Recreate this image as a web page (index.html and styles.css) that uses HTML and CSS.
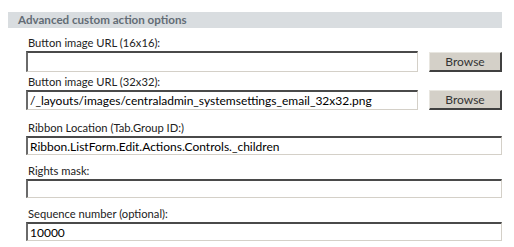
FILE: index.html
```html
<!DOCTYPE html>
<html lang="en">

<head>
    <meta charset="UTF-8">
    <title>Advanced custom action options</title>
    <link rel="stylesheet" href="styles.css">
</head>

<body>

    <div class="section">
        <div class="section-title">Advanced custom action options</div>

        <div class="fields">
            <div class="field field-image">
                <label>Button image URL (16x16):</label>
                <div class="field-row">
                    <input type="text" class="short" value="">
                    <button type="button">Browse</button>
                </div>
            </div>

            <div class="field field-image">
                <label>Button image URL (32x32):</label>
                <div class="field-row">
                    <input type="text" class="short" value="/_layouts/images/centraladmin_systemsettings_email_32x32.png">
                    <button type="button">Browse</button>
                </div>
            </div>

            <div class="field">
                <label>Ribbon Location (Tab.Group ID:)</label>
                <input type="text" value="Ribbon.ListForm.Edit.Actions.Controls._children">
            </div>

            <div class="field">
                <label>Rights mask:</label>
                <input type="text" value="">
            </div>

            <div class="field">
                <label>Sequence number (optional):</label>
                <input type="text" value="10000">
            </div>
        </div>
    </div>

</body>

</html>
```

FILE: styles.css
```css
body {
    margin: 0;
    padding: 12px 12px 0 8px;
    background-color: white;
    font-family: Lato, Arial, sans-serif;
    font-size: 12px;
    color: #222;
}

.section {
    width: 494px;
}

.section-title {
    height: 16px;
    line-height: 16px;
    padding-left: 10px;
    background-color: #d9dde0;
    color: #636c75;
    font-weight: bold;
    font-size: 11.6px;
}

.fields {
    padding: 7px 0 0 18px;
}

.field {
    display: flex;
    flex-direction: column;
    margin-bottom: 8px;
}

.field-image {
    margin-bottom: 2px;
}

.field-image + .field-image {
    margin-bottom: 10px;
}

.field label {
    height: 16px;
    line-height: 16px;
    padding-left: 2px;
    font-size: 11.2px;
}

.field-row {
    display: flex;
    align-items: center;
    gap: 11px;
}

input {
    box-sizing: border-box;
    width: 476px;
    height: 19px;
    margin: 0;
    padding: 0 2px;
    border-style: solid;
    border-width: 2px 1px 1px 2px;
    border-color: #4a4a4a #d4d0c8 #d4d0c8 #6a6a6a;
    font-family: Lato, Arial, sans-serif;
    font-size: 12px;
    color: #000;
    background-color: white;
}

input.short {
    width: 392px;
    height: 21px;
}

.field-image + .field-image input.short {
    height: 20px;
}

button {
    box-sizing: border-box;
    width: 73px;
    height: 20px;
    margin: 0;
    padding: 0;
    border-style: solid;
    border-width: 1px 2px 2px 1px;
    border-color: #e8e6e0 #404040 #404040 #e8e6e0;
    background-color: #d4d0c8;
    font-family: Lato, Arial, sans-serif;
    font-size: 12px;
    color: #333;
}
```
